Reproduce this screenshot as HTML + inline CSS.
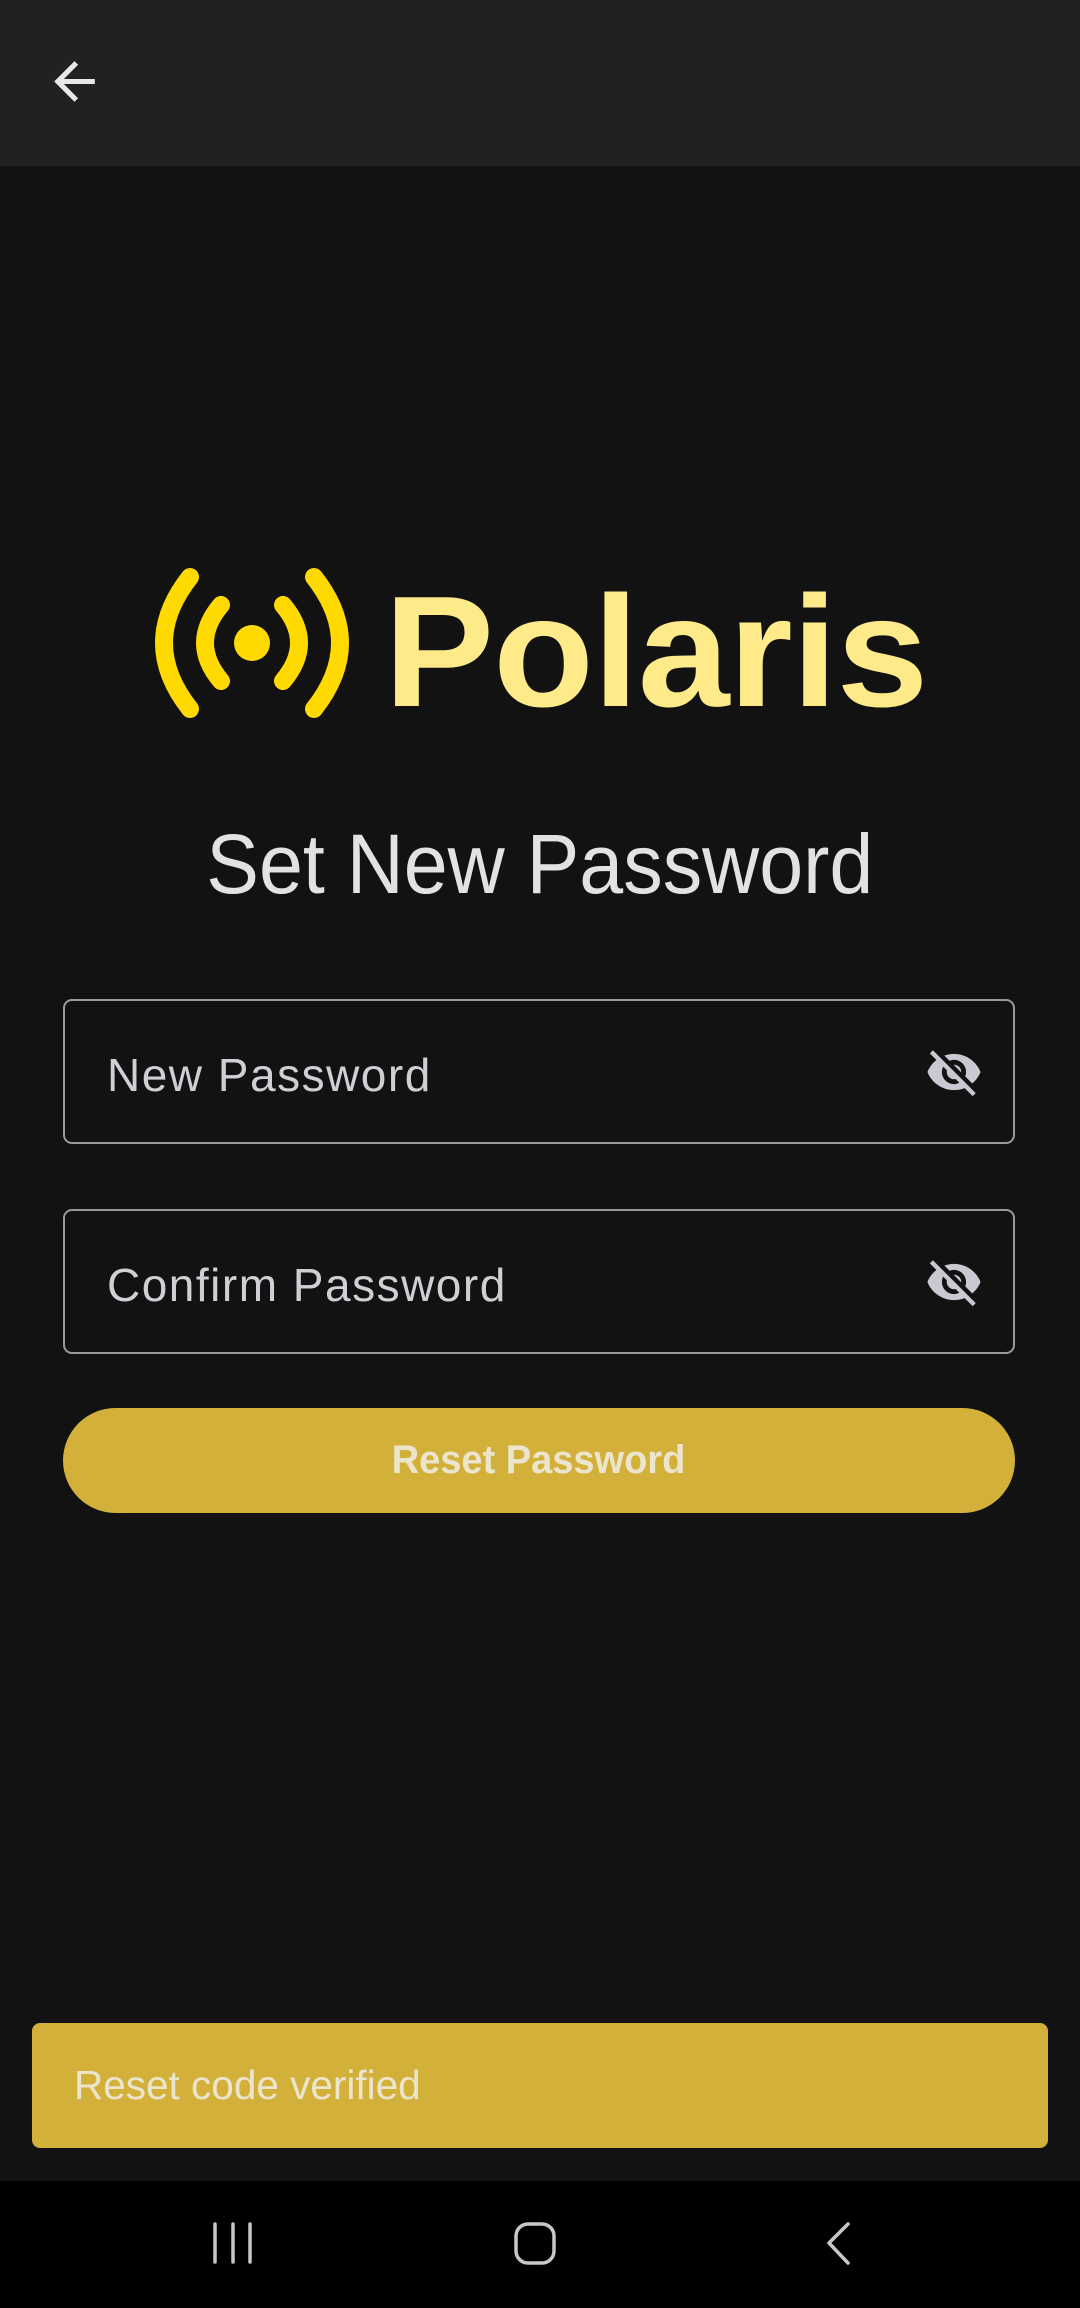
<!DOCTYPE html>
<html><head><meta charset="utf-8"><style>
*{margin:0;padding:0;box-sizing:border-box}
body{width:1080px;height:2308px;background:#121212;position:relative;overflow:hidden;font-family:"Liberation Sans",sans-serif}
.top{position:absolute;left:0;top:0;width:1080px;height:166px;background:#212121}
.abs{position:absolute}
.field{position:absolute;left:63px;width:952px;height:145px;border:2.5px solid #9a9a9e;border-radius:9px}
.label{position:absolute;left:42px;top:4px;line-height:140px;font-size:46px;color:#cfcfd6;letter-spacing:1.5px}
.eye{position:absolute;right:30px;top:42px}
.btn{position:absolute;left:63px;top:1408px;width:952px;height:105px;border-radius:53px;background:#d3b039;color:#ece5cd;font-size:40px;font-weight:bold;text-align:center;line-height:105px}
.btn span{display:inline-block;transform:scaleX(0.95)}
.snack{position:absolute;left:32px;top:2023px;width:1016px;height:125px;border-radius:8px;background:#d3b039;color:#ece5cd;font-size:40.5px;line-height:125px;padding-left:42px}
.nav{position:absolute;left:0;top:2181px;width:1080px;height:127px;background:#000}
</style></head><body>
<div class="top"></div>
<svg class="abs" style="left:44px;top:51px" width="61" height="61" viewBox="0 0 24 24"><path fill="#e8e8e8" d="M20 11H7.83l5.59-5.59L12 4l-8 8 8 8 1.41-1.41L7.83 13H20v-2z"/></svg>

<svg class="abs" style="left:0;top:0" width="400" height="800" viewBox="0 0 400 800">
<g fill="none" stroke="#ffd900" stroke-width="18" stroke-linecap="round">
<path d="M190 577 Q138 643 190 709"/>
<path d="M221 605 Q189 643 221 681"/>
<path d="M314 577 Q366 643 314 709"/>
<path d="M283 605 Q315 643 283 681"/>
</g>
<circle cx="252" cy="643" r="18" fill="#ffd900"/>
</svg>
<div class="abs" style="left:384px;top:552px;font-size:158px;font-weight:bold;color:#ffea8a;line-height:200px;transform:scaleX(1.045);transform-origin:left top;letter-spacing:-1px">Polaris</div>

<div class="abs" style="left:0;width:1080px;top:814px;text-align:center;font-size:84px;color:#e2e2e2;line-height:100px"><span style="display:inline-block;transform:scaleX(0.94)">Set New Password</span></div>

<div class="field" style="top:999px"><div class="label">New Password</div>
<svg class="eye" width="58" height="58" viewBox="0 0 24 24"><path fill="#cbc8d2" d="M12 7c2.76 0 5 2.24 5 5 0 .65-.13 1.26-.36 1.83l2.92 2.92c1.51-1.26 2.7-2.89 3.43-4.75-1.730-4.39-6-7.5-11-7.5-1.4 0-2.74.25-3.98.7l2.16 2.16C10.74 7.13 11.35 7 12 7zM2 4.27l2.28 2.28.46.46C3.08 8.3 1.78 10.02 1 12c1.73 4.39 6 7.5 11 7.5 1.55 0 3.03-.3 4.38-.84l.42.42L19.73 22 21 20.73 3.27 3 2 4.27zM7.53 9.8l1.55 1.55c-.05.21-.08.43-.08.65 0 1.66 1.34 3 3 3 .22 0 .44-.03.65-.08l1.55 1.55c-.67.33-1.41.53-2.2.53-2.76 0-5-2.24-5-5 0-.79.2-1.53.53-2.2zm4.31-.78l3.15 3.15.02-.16c0-1.66-1.34-3-3-3l-.17.01z"/></svg></div>

<div class="field" style="top:1209px"><div class="label">Confirm Password</div>
<svg class="eye" width="58" height="58" viewBox="0 0 24 24"><path fill="#cbc8d2" d="M12 7c2.76 0 5 2.24 5 5 0 .65-.13 1.26-.36 1.83l2.92 2.92c1.51-1.26 2.7-2.89 3.43-4.75-1.73-4.39-6-7.5-11-7.5-1.4 0-2.74.25-3.98.7l2.16 2.16C10.74 7.13 11.35 7 12 7zM2 4.27l2.28 2.28.46.46C3.08 8.3 1.78 10.02 1 12c1.73 4.39 6 7.5 11 7.5 1.55 0 3.03-.3 4.38-.84l.42.42L19.73 22 21 20.73 3.27 3 2 4.27zM7.53 9.8l1.55 1.55c-.05.21-.08.43-.08.65 0 1.66 1.34 3 3 3 .22 0 .44-.03.65-.08l1.55 1.55c-.67.33-1.41.53-2.2.53-2.76 0-5-2.24-5-5 0-.79.2-1.53.53-2.2zm4.31-.78l3.15 3.15.02-.16c0-1.66-1.34-3-3-3l-.17.01z"/></svg></div>

<div class="btn"><span>Reset Password</span></div>

<div class="snack">Reset code verified</div>

<div class="nav"></div>
<svg class="abs" style="left:0;top:2181px" width="1080" height="127" viewBox="0 2181 1080 127">
<g stroke="#c8c8c8" stroke-width="3.5" fill="none" stroke-linecap="round" stroke-linejoin="round">
<path d="M215 2224V2262M233 2224V2262M250 2224V2262"/>
<rect x="516" y="2224" width="38" height="39" rx="12"/>
<path d="M848 2224L829 2243L848 2263"/>
</g>
</svg>
</body></html>
